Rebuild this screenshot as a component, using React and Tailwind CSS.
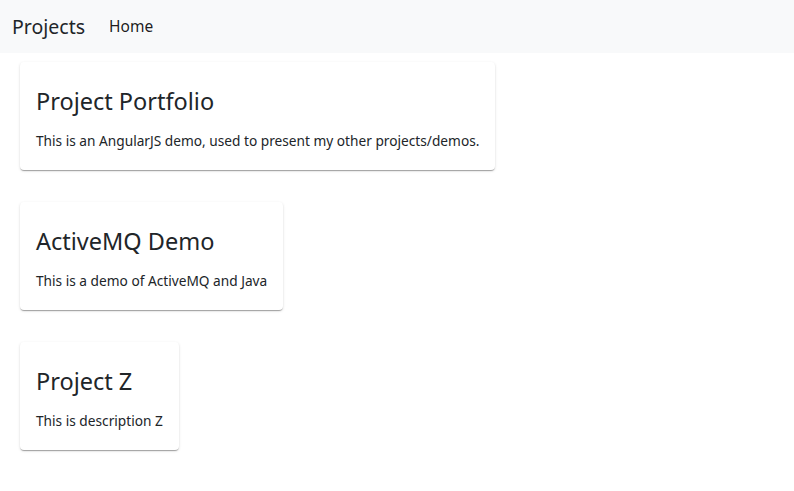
const projects = [
  { title: 'Project Portfolio', description: 'This is an AngularJS demo, used to present my other projects/demos.' },
  { title: 'ActiveMQ Demo', description: 'This is a demo of ActiveMQ and Java' },
  { title: 'Project Z', description: 'This is description Z' },
]

function ProjectCard({ project }) {
  return (
    <div className="self-start bg-white rounded shadow-[0_2px_1px_-1px_rgba(0,0,0,0.2),0_1px_1px_0_rgba(0,0,0,0.14),0_1px_3px_0_rgba(0,0,0,0.12)] px-4 pt-[25px] pb-[18px] h-[108px]">
      <h4 className="text-[23.5px] leading-[1.2] font-normal mb-4">{project.title}</h4>
      <p className="text-[13.7px] leading-[1.5]">{project.description}</p>
    </div>
  )
}

export default function App() {
  return (
    <div className="min-h-screen bg-white text-[#212529] font-['Noto_Sans',sans-serif]">
      <nav className="h-[53px] bg-[#f8f9fa] flex items-center px-3">
        <span className="text-[19.5px] mr-6">Projects</span>
        <span className="text-[15.5px] text-black/90">Home</span>
      </nav>
      <div className="flex flex-col gap-8 px-5 pt-[9px] pb-8">
        {projects.map(p => (
          <ProjectCard key={p.title} project={p} />
        ))}
      </div>
    </div>
  )
}
